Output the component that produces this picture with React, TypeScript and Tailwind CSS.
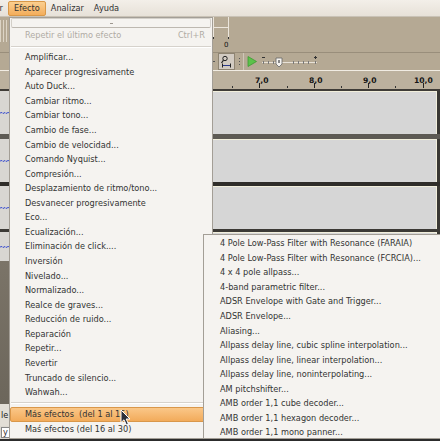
import React from "react";

const mainItems = [
  "Amplificar...",
  "Aparecer progresivamente",
  "Auto Duck...",
  "Cambiar ritmo...",
  "Cambiar tono...",
  "Cambio de fase...",
  "Cambio de velocidad...",
  "Comando Nyquist...",
  "Compresión...",
  "Desplazamiento de ritmo/tono...",
  "Desvanecer progresivamente",
  "Eco...",
  "Ecualización...",
  "Eliminación de click....",
  "Inversión",
  "Nivelado...",
  "Normalizado...",
  "Realce de graves...",
  "Reducción de ruido...",
  "Reparación",
  "Repetir...",
  "Revertir",
  "Truncado de silencio...",
  "Wahwah...",
];

const subItems = [
  "4 Pole Low-Pass Filter with Resonance (FARAIA)",
  "4 Pole Low-Pass Filter with Resonance (FCRCIA)...",
  "4 x 4 pole allpass...",
  "4-band parametric filter...",
  "ADSR Envelope with Gate and Trigger...",
  "ADSR Envelope...",
  "Aliasing...",
  "Allpass delay line, cubic spline interpolation...",
  "Allpass delay line, linear interpolation...",
  "Allpass delay line, noninterpolating...",
  "AM pitchshifter...",
  "AMB order 1,1 cube decoder...",
  "AMB order 1,1 hexagon decoder...",
  "AMB order 1,1 mono panner...",
];

function Squiggle() {
  return (
    <svg width="10" height="4" viewBox="0 0 10 4" className="block">
      <path d="M0 2 L2 1.5 L3 2.5 L5 1.5 L6 2.5 L8 1.5 L10 2" fill="none" stroke="#3b4fd0" strokeWidth="1" />
    </svg>
  );
}

function Track({ h = "h-[43px]" }: { h?: string }) {
  return (
    <div className={`flex ${h}`}>
      <div className="w-[150px] bg-[#d8d6d2] flex items-center">
        <Squiggle />
      </div>
      <div className="flex-1 bg-[#d6d6d6] border-t border-r border-[#f2efdc]" />
      <div className="w-[3px] bg-[#3a3834]" />
    </div>
  );
}

function Ruler() {
  const majors = [
    { x: 259, label: "7,0", lx: 255 },
    { x: 314, label: "8,0", lx: 309 },
    { x: 368, label: "9,0", lx: 363 },
    { x: 423, label: "10,0", lx: 414 },
  ];
  const minors = [232, 287, 341, 395];
  return (
    <svg width="440" height="19" viewBox="0 0 440 19" className="block">
      {majors.map((m) => (
        <g key={m.label}>
          <line x1={m.x + 0.5} y1="12" x2={m.x + 0.5} y2="17" stroke="#222" strokeWidth="1" />
          <text x={m.lx} y="12" fontSize="7.6" fontWeight="bold" fill="#151515" fontFamily="DejaVu Sans, sans-serif">
            {m.label}
          </text>
        </g>
      ))}
      {minors.map((x) => (
        <rect key={x} x={x} y="15" width="1" height="2" fill="#333" />
      ))}
    </svg>
  );
}

export default function App() {
  return (
    <div className="relative w-[440px] h-[441px] overflow-hidden flex flex-col bg-[#b5a994] font-['DejaVu_Sans',sans-serif] text-[8.2px] text-[#333]">
      {/* Menubar */}
      <div className="h-[17px] flex items-stretch bg-linear-to-b from-[#f3efe9] to-[#e7e1d8] border-b border-[#c9c2b6] shrink-0">
        <div className="ml-[-35.4px] px-[5px] flex items-center">Generar</div>
        <div className="px-[5px] flex items-center bg-linear-to-b from-[#fbcf8f] to-[#f3ad5b] border border-[#d99848] rounded-[2px] mt-[1px]">
          Efecto
        </div>
        <div className="px-[5px] flex items-center">Analizar</div>
        <div className="px-[5px] flex items-center">Ayuda</div>
      </div>

      {/* Upper toolbar area */}
      <div className="h-[35px] flex shrink-0">
        <div className="w-[9px] flex flex-col gap-[2px] pt-[3px]">
          <div className="h-[22px] bg-[repeating-linear-gradient(to_right,#e6dfd2_0_1px,#b5a994_1px_3px)] opacity-80" />
        </div>
        <div className="w-[203px]" />
        <svg width="20" height="35" viewBox="0 0 20 35" className="block">
          <line x1="1.5" y1="0" x2="1.5" y2="20" stroke="#ece6dc" />
          <line x1="16.5" y1="0" x2="16.5" y2="20" stroke="#ece6dc" />
          <line x1="1" y1="10.5" x2="17" y2="10.5" stroke="#ece6dc" />
          <rect x="1" y="20" width="1" height="2" fill="#333" />
          <rect x="16" y="20" width="1" height="2" fill="#333" />
          <text x="12" y="30" fontSize="7" fill="#111" fontFamily="DejaVu Sans, sans-serif">0</text>
        </svg>
      </div>

      {/* Tool row */}
      <div className="h-[18px] flex items-stretch border-t border-[#998e7b] shrink-0">
        <div className="w-[212px]" />
        <div className="w-[4px] flex items-center">
          <div className="w-[3px] h-[1px] bg-[#555]" />
        </div>
        <div className="w-[2px]" />
        <div className="w-[17px] bg-[#d2cbc2] border border-[#8e8472] flex items-center justify-center">
          <svg width="13" height="13" viewBox="0 0 13 13">
            <circle cx="5" cy="3.5" r="2.2" fill="none" stroke="#222" strokeWidth="1" />
            <line x1="3.5" y1="5.2" x2="1.5" y2="8" stroke="#222" strokeWidth="1.2" />
            <line x1="2" y1="10.5" x2="11" y2="10.5" stroke="#2a3a8a" strokeWidth="1" />
            <line x1="2.5" y1="8.5" x2="2.5" y2="12.5" stroke="#222" strokeWidth="1" />
            <line x1="10.5" y1="8.5" x2="10.5" y2="12.5" stroke="#222" strokeWidth="1" />
          </svg>
        </div>
        <div className="w-[8px] flex flex-col items-center justify-center gap-[2px]">
          <div className="w-[1px] h-[1px] bg-[#555]" />
          <div className="w-[1px] h-[1px] bg-[#555]" />
          <div className="w-[1px] h-[1px] bg-[#555]" />
        </div>
        <div className="w-[16px] border-l border-[#cfc6b8] flex items-center justify-center">
          <svg width="10" height="11" viewBox="0 0 10 11">
            <path d="M1 0.5 L9.5 5.5 L1 10.5 Z" fill="#5cc24a" stroke="#3f9a33" strokeWidth="0.8" />
          </svg>
        </div>
        <svg width="62" height="17" viewBox="0 0 62 17" className="block">
          <line x1="3" y1="4.5" x2="6" y2="4.5" stroke="#333" />
          <line x1="55" y1="4.5" x2="58" y2="4.5" stroke="#333" />
          <line x1="56.5" y1="3" x2="56.5" y2="6" stroke="#333" />
          <line x1="3" y1="9.5" x2="58" y2="9.5" stroke="#e8e2d8" />
          {[4, 9, 14, 19, 34, 39, 44, 49, 56].map((x) => (
            <line key={x} x1={x + 0.5} y1="8" x2={x + 0.5} y2="11" stroke="#777" />
          ))}
          <path d="M17 5 L23 5 L23 11 L20 14 L17 11 Z" fill="#f4f2ee" stroke="#666" strokeWidth="0.8" />
          <rect x="19" y="7" width="2" height="3" fill="#888" />
        </svg>
      </div>

      {/* Ruler */}
      <div className="h-[19px] border-t border-[#f1ece3] bg-[#bcb19e] shrink-0">
        <Ruler />
      </div>

      {/* Tracks */}
      <div className="h-[2px] bg-[#3f3c37] shrink-0" />
      <Track />
      <div className="h-[5px] bg-[#5d5a54] shrink-0" />
      <Track />
      <div className="h-[4px] bg-[#2f2d2a] shrink-0" />
      <Track />
      <div className="h-[3px] bg-[#3c3a36] shrink-0" />
      <Track h="h-[29px]" />
      <div className="flex-1 bg-linear-to-b from-[#7b7468] to-[#6c665b]" />
      <div className="h-[22px] bg-[#e2ded6] flex items-center pl-[1px] text-[#222] shrink-0">le</div>
      <div className="h-[13px] bg-[#dcd8d0] flex items-center pl-[1px] shrink-0">
        <div className="bg-white border border-[#888] px-[1px] leading-none">y 5</div>
      </div>
      <div className="h-[2px] bg-[#2c2c2c] shrink-0" />

      {/* Main dropdown menu */}
      <div className="absolute left-[9px] top-[17px] w-[204px] h-[422px] bg-[#f5f3f0] border border-[#a39e96] flex flex-col">
        <div className="mx-[1px] h-[10px] border border-[#d3cfc8] border-b-[#bdb8b0] rounded-[2px] flex items-center justify-center shrink-0">
          <div className="w-[3px] h-[1px] bg-[#9d978f]" />
        </div>
        <div className="h-[15px] flex items-center justify-between pl-[15px] pr-[7px] text-[#b0aba4] leading-none shrink-0">
          <span>Repetir el último efecto</span>
          <span>Ctrl+R</span>
        </div>
        <div className="h-[7px] flex flex-col justify-center px-[1px] shrink-0">
          <div className="h-[1px] bg-[#d6d2cc]" />
          <div className="h-[1px] bg-white" />
        </div>
        {mainItems.map((t) => (
          <div key={t} className="h-[14.57px] flex items-center pl-[15px] leading-none shrink-0">
            {t}
          </div>
        ))}
        <div className="h-[7.6px] flex flex-col justify-center px-[1px] shrink-0">
          <div className="h-[1px] bg-[#d6d2cc]" />
          <div className="h-[1px] bg-white" />
        </div>
        <div className="h-[15px] mx-[0px] flex items-center pl-[15px] leading-none whitespace-pre bg-linear-to-b from-[#fac788] to-[#f2ab5a] border border-[#d9974a] rounded-[2px] shrink-0">
          <span className="ml-[-1px]">Más efectos  (del 1 al 15)</span>
        </div>
        <div className="h-[14.5px] flex items-center pl-[15px] leading-none shrink-0">Maś efectos (del 16 al 30)</div>
      </div>

      {/* Submenu */}
      <div className="absolute left-[203px] top-[234px] w-[240px] h-[205px] bg-[#f5f3f0] border border-[#a39e96] pt-[1px] flex flex-col">
        {subItems.map((t) => (
          <div key={t} className="h-[14.57px] flex items-center pl-[16px] leading-none whitespace-nowrap shrink-0">
            {t}
          </div>
        ))}
      </div>

      {/* Mouse cursor */}
      <svg width="12" height="17" viewBox="0 0 12 17" className="absolute left-[120px] top-[409px]">
        <path d="M1 1 L1 13.5 L4 10.8 L6.3 15.8 L8.4 14.9 L6.2 10 L10 10 Z" fill="#2b2f3a" stroke="#ffffff" strokeWidth="1" strokeLinejoin="round" />
      </svg>
    </div>
  );
}
